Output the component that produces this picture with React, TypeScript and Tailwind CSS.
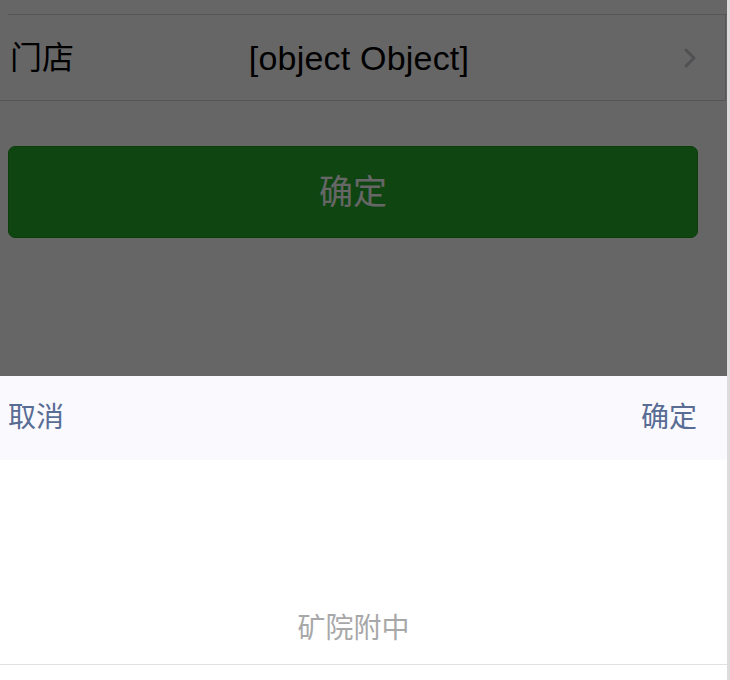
export default function App() {
  return (
    <div className="flex h-[680px] w-[730px] overflow-hidden bg-white font-['Liberation_Sans','Noto_Sans_CJK_SC',sans-serif]">
      <div className="relative h-full w-[727px]">
        <div className="pt-[14px]">
          <div className="ml-[8px] h-px bg-[#d4d4d4]" />
          <div className="flex h-[86px] w-[726px] items-center border-b border-r border-[#d4d4d4] pl-[10px] pr-[27px]">
            <span className="text-[32px] leading-none text-black">门店</span>
            <span className="flex-1 pr-[38px] text-center text-[34px] leading-none tracking-[0.2px] text-black">[object Object]</span>
            <svg width="16" height="24" viewBox="0 0 16 24" fill="none">
              <polyline points="4,4 12,12 4,20" stroke="#c8c8cd" strokeWidth="3" strokeLinecap="round" strokeLinejoin="round" />
            </svg>
          </div>
        </div>

        <button className="mx-[8px] mt-[45px] flex h-[92px] w-[690px] items-center justify-center rounded-[7px] border border-[#1c9a1c] bg-[#23ad2b] text-[34px] leading-none text-white">
          确定
        </button>

        <div className="absolute inset-0 bg-black/60" />

        <div className="absolute bottom-0 left-0 right-0">
          <div className="flex h-[84px] items-center justify-between bg-[#faf9fe] pl-[8px] pr-[30px] text-[28px] leading-none text-[#586c94]">
            <span>取消</span>
            <span>确定</span>
          </div>
          <div className="h-[220px] bg-white">
            <div className="pr-[20px] pt-[155px] text-center text-[28px] leading-[28px] text-[#a8a8a8]">矿院附中</div>
            <div className="mt-[21px] h-px bg-[#e0e0e0]" />
          </div>
        </div>
      </div>
      <div className="w-[3px] bg-[#dcdcdc]" />
    </div>
  )
}
